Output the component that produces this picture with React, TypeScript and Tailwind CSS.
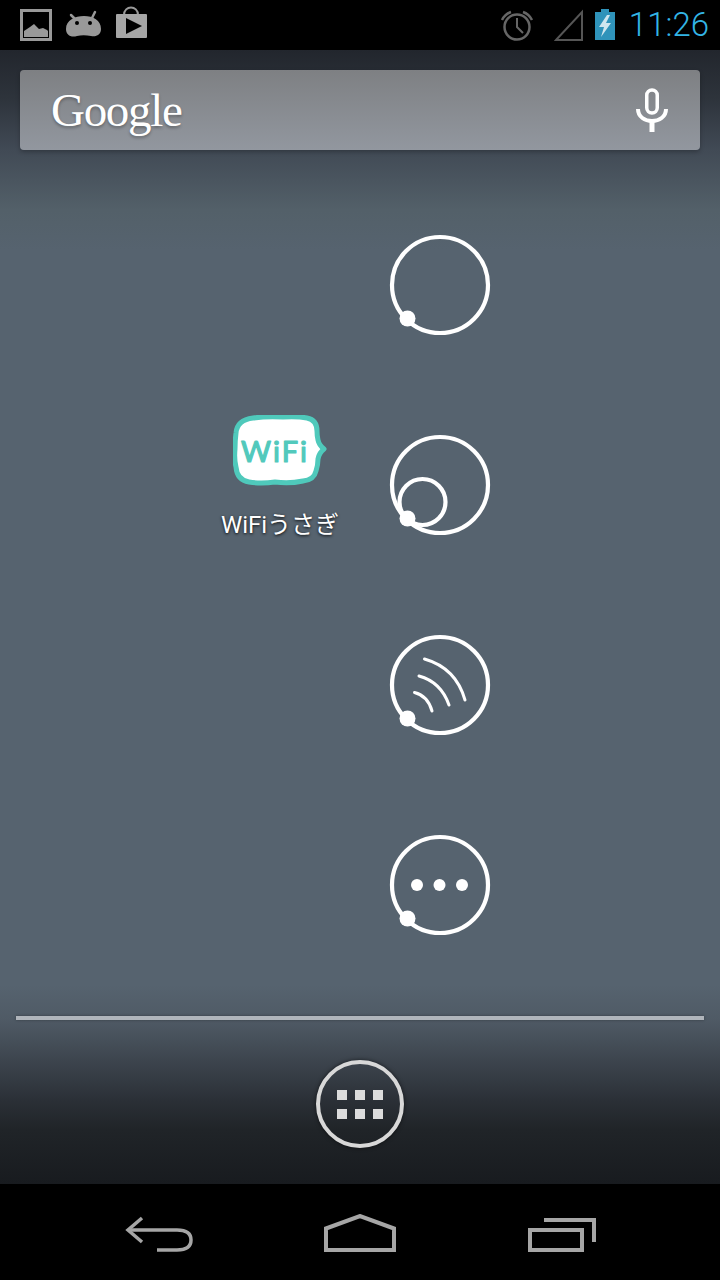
import React from "react";

const ringDot = (
  <>
    <circle cx="60" cy="60" r="48" fill="none" stroke="#fff" strokeWidth="4.2" />
    <circle cx="27.5" cy="93.5" r="8" fill="#fff" />
  </>
);

function Ring({ children }: { children?: React.ReactNode }) {
  return (
    <svg width="120" height="120" viewBox="0 0 120 120" className="block">
      {ringDot}
      {children}
    </svg>
  );
}

function WifiLogo() {
  return (
    <svg width="94" height="72" viewBox="0 0 94 72" className="block">
      <path
        d="M3 18 Q4 5 20 3 Q34 1 50 2 Q64 1 74 3 Q84 5 84 16 Q84 21 85 25 Q86 30 91 34 Q86 38 85 44 Q85 50 83 56 Q81 65 70 66 Q56 69 42 67 Q28 69 16 67 Q4 65 3 52 Q1 44 2 34 Q2 26 3 18 Z"
        fill="#fff"
        stroke="#4fc9bb"
        strokeWidth="5"
        strokeLinejoin="round"
      />
      <text
        x="42"
        y="47"
        textAnchor="middle"
        fontFamily="Lato, 'Noto Sans', sans-serif"
        fontWeight="400"
        fontSize="29"
        letterSpacing="2"
        fill="#52c9bc"
        stroke="#52c9bc"
        strokeWidth="1.2"
        strokeLinejoin="round"
      >
        WiFi
      </text>
    </svg>
  );
}

function StatusBar() {
  return (
    <div className="flex h-[50px] shrink-0 bg-black">
      {/* notification icons */}
      <svg width="32" height="50" viewBox="0 0 32 50" className="ml-5">
        <rect x="1.5" y="10.5" width="29" height="29" fill="none" stroke="#999" strokeWidth="3" />
        <path d="M4 37 V31 L10 27 L14 24 L19 29 L23 28 L27 30 L28 31 V37 Z" fill="#999" />
      </svg>
      <svg width="36" height="50" viewBox="0 0 36 50" className="ml-[14px]">
        <path d="M5 15 L9 19 M29 12 L26 18" stroke="#999" strokeWidth="2.5" strokeLinecap="round" />
        <path
          d="M0 29 C0 20 9 16 18 16 C27 16 35 20 35 29 C35 35 30 37 25 36 C20 35 15 35 11 36 C5 38 0 35 0 29 Z"
          fill="#999"
        />
        <circle cx="11" cy="23" r="2" fill="#000" />
        <circle cx="24" cy="23" r="2" fill="#000" />
      </svg>
      <svg width="32" height="50" viewBox="0 0 32 50" className="ml-[13px]">
        <path d="M9 15 C9 5 23 5 23 15" fill="none" stroke="#999" strokeWidth="2" />
        <rect x="1" y="14" width="31" height="24" rx="1" fill="#a6a6a6" />
        <path d="M11 18 L27 26 L11 34 Z" fill="#000" />
      </svg>

      <div className="ml-auto flex">
        <svg width="36" height="50" viewBox="0 0 36 50">
          <circle cx="18" cy="27" r="12.5" fill="none" stroke="#666" strokeWidth="2.5" />
          <path d="M18 18 V27 L24 33" fill="none" stroke="#666" strokeWidth="2" />
          <path d="M3 20 Q6 14 12 12 M33 20 Q30 14 24 12" fill="none" stroke="#666" strokeWidth="2.5" />
        </svg>
        <svg width="30" height="50" viewBox="0 0 30 50" className="ml-[19px]">
          <path d="M2 40 L28 12 V40 Z" fill="none" stroke="#555" strokeWidth="2" />
        </svg>
        <svg width="22" height="50" viewBox="0 0 22 50" className="ml-[10px]">
          <path d="M7 9 H15 V12 H21 V40 H1 V12 H7 Z" fill="#2f93ba" />
          <path d="M13 15 L5 27 H10 L7 37 L17 23 H12 L16 15 Z" fill="#cfe6ef" />
        </svg>
        <span className="ml-[13px] mr-[11px] font-['Roboto',sans-serif] text-[33px] leading-[50px] font-light text-[#33b5e5]">
          11:26
        </span>
      </div>
    </div>
  );
}

function SearchBar() {
  return (
    <div className="mx-5 mt-5 flex h-20 items-center justify-between rounded-[4px] bg-gradient-to-b from-[#7e8083] to-[#92979f] pl-[31px] pr-7 shadow-[0_2px_4px_rgba(0,0,0,0.25)]">
      <span className="font-['Liberation_Serif',serif] text-[47px] tracking-[-1.3px] text-white [text-shadow:0_2px_3px_rgba(0,0,0,0.3)]">
        Google
      </span>
      <svg width="40" height="50" viewBox="0 0 40 50" className="block">
        <rect x="14.75" y="5" width="10.5" height="23" rx="5.25" fill="none" stroke="#fff" strokeWidth="3.5" />
        <path d="M6 24 C6 40 34 40 34 24" fill="none" stroke="#fff" strokeWidth="4" />
        <path d="M20 36 V47" stroke="#fff" strokeWidth="5" />
      </svg>
    </div>
  );
}

function Workspace() {
  return (
    <div className="mt-[35px] grid grid-cols-[160px_160px_160px_160px] grid-rows-[200px_200px_200px_200px] px-10">
      <div className="col-start-3 row-start-1 flex items-center justify-center">
        <Ring />
      </div>
      <div className="col-start-2 row-start-2 flex flex-col items-center pt-[30px]">
        <WifiLogo />
        <span className="mt-[20px] font-['Roboto','Noto_Sans_CJK_JP',sans-serif] text-[24px] leading-[36px] whitespace-nowrap text-white [text-shadow:0_1px_3px_rgba(0,0,0,0.9)]">
          WiFiうさぎ
        </span>
      </div>
      <div className="col-start-3 row-start-2 flex items-center justify-center">
        <Ring>
          <circle cx="42.5" cy="77" r="23" fill="none" stroke="#fff" strokeWidth="4.2" />
        </Ring>
      </div>
      <div className="col-start-3 row-start-3 flex items-center justify-center">
        <Ring>
          <g fill="none" stroke="#fff" strokeWidth="3" strokeLinecap="round">
            <path d="M44.5 34 Q76 43 85 75" />
            <path d="M39 51 Q61 57 69 80" />
            <path d="M34.5 67.5 Q48 71 52 86" />
          </g>
        </Ring>
      </div>
      <div className="col-start-3 row-start-4 flex items-center justify-center">
        <Ring>
          <circle cx="37" cy="60" r="6" fill="#fff" />
          <circle cx="59.5" cy="60" r="6" fill="#fff" />
          <circle cx="82" cy="60" r="6" fill="#fff" />
        </Ring>
      </div>
    </div>
  );
}

function Dock() {
  return (
    <div className="flex flex-1 flex-col bg-[linear-gradient(to_bottom,#56636f_0px,#4f5a65_35px,#2b3037_115px,#202428_145px,#181b1f_199px)]">
      <div className="mx-4 mt-[31px] h-1 shrink-0 bg-[#b0b5bb] shadow-[0_0_3px_rgba(0,0,0,0.35)]" />
      <div className="flex flex-1 items-start justify-center pt-10">
        <div className="flex h-[88px] w-[88px] flex-col items-center justify-center gap-[9px] rounded-full border-4 border-[#d8d8d8] shadow-[0_0_4px_rgba(0,0,0,0.6)]">
          {[0, 1].map((row) => (
            <div key={row} className="flex gap-2">
              <div className="h-[10px] w-[10px] bg-[#dcdcdc]" />
              <div className="h-[10px] w-[10px] bg-[#dcdcdc]" />
              <div className="h-[10px] w-[10px] bg-[#dcdcdc]" />
            </div>
          ))}
        </div>
      </div>
    </div>
  );
}

function NavBar() {
  return (
    <div className="flex h-24 shrink-0 items-start bg-black pt-[30px]">
      <svg width="70" height="40" viewBox="0 0 70 40" className="ml-[125px] block">
        <path d="M3 16 H52 Q66 16 66 26 Q66 36 52 36 H32" fill="none" stroke="#a6a6a6" strokeWidth="3.5" />
        <path d="M17 4 L3 16 L17 28" fill="none" stroke="#a6a6a6" strokeWidth="3.5" />
      </svg>
      <svg width="76" height="40" viewBox="0 0 76 40" className="ml-[127px] block">
        <path d="M4 14.5 L38 2 L72 14.5 V36 H4 Z" fill="none" stroke="#a6a6a6" strokeWidth="4" />
      </svg>
      <svg width="72" height="40" viewBox="0 0 72 40" className="ml-[130px] block">
        <rect x="2" y="16" width="52" height="20" fill="none" stroke="#a6a6a6" strokeWidth="4" />
        <path d="M16 6 H66 V28" fill="none" stroke="#a6a6a6" strokeWidth="4" />
      </svg>
    </div>
  );
}

export default function App() {
  return (
    <div className="flex h-[1280px] w-[720px] flex-col overflow-hidden bg-black">
      <StatusBar />
      <div className="flex flex-1 flex-col bg-[linear-gradient(to_bottom,#22262d_0px,#2e343c_50px,#414a55_100px,#536069_160px,#56636f_200px)]">
        <SearchBar />
        <Workspace />
        <Dock />
      </div>
      <NavBar />
    </div>
  );
}
